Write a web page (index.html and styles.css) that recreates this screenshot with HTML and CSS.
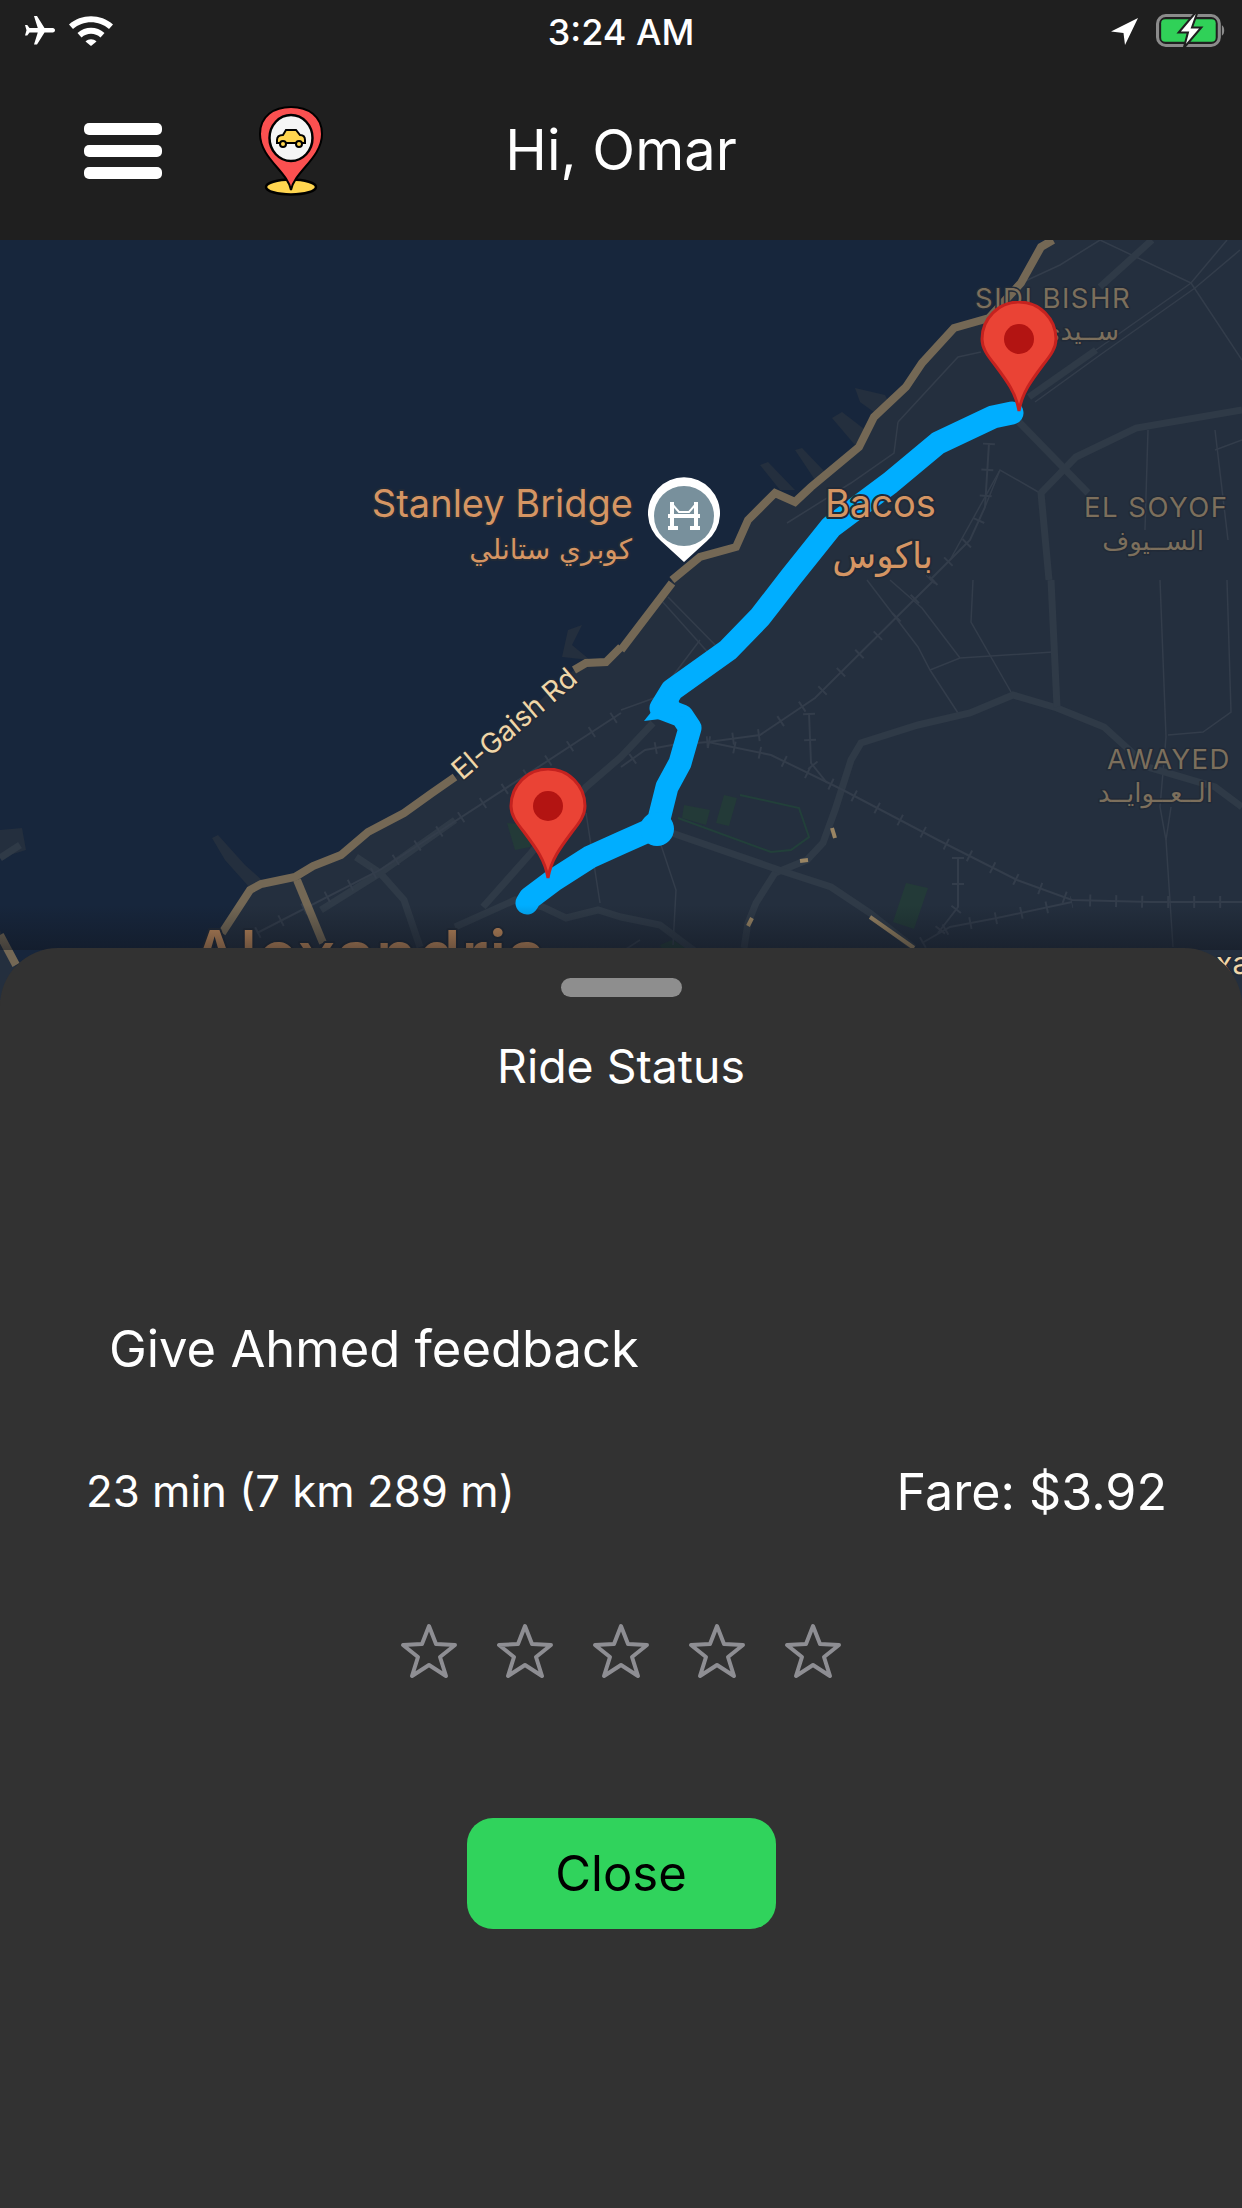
FILE: index.html
```html
<!DOCTYPE html>
<html lang="en">
<head>
    <meta charset="UTF-8">
    <meta name="viewport" content="width=device-width, initial-scale=1.0">
    <title>Ride Status</title>
    <link rel="stylesheet" href="styles.css">
</head>
<body>
<div class="page">

    <header class="top">
        <div class="statusbar">
            <div class="status-left">
                <svg class="ic-plane" viewBox="0 0 24 24"><path transform="rotate(90 12 12)" d="M21 16v-2l-8-5V3.5c0-.83-.67-1.5-1.5-1.5S10 2.67 10 3.5V9l-8 5v2l8-2.5V19l-2 1.5V22l3.5-1 3.5 1v-1.5L13 19v-5.5l8 2.5z"/></svg>
                <svg class="ic-wifi" viewBox="0 0 46 33">
                    <path d="M1 11.5C13 .5 33 .5 45 11.5l-4 4.5C31 7 15 7 5 16z"/>
                    <path d="M9.500 20C17 13 29 13 36.500 20l-4 4.500C27 19.500 19 19.500 13.500 24.500z"/>
                    <path d="M17.500 28.500C20.500 25.500 25.500 25.500 28.500 28.500L23 33z"/>
                </svg>
            </div>
            <div class="clock">3:24 AM</div>
            <div class="status-right">
                <svg class="ic-arrow" viewBox="0 0 27 27"><path d="M27 0 0 13.500 12.500 15 14 27z"/></svg>
                <svg class="ic-battery" viewBox="0 0 68 34">
                    <rect x="1.500" y="2.500" width="60" height="29" rx="8" fill="none" stroke="#8b8b8b" stroke-width="3"/>
                    <rect x="5" y="6" width="53" height="22" rx="4" fill="#30d158"/>
                    <path d="M64 12c3 1 3 9 0 10z" fill="#8b8b8b"/>
                    <path d="M38 0 22 19h9l-4 15 17-20h-9l5-14z" fill="#fff" stroke="#1f1f1f" stroke-width="2"/>
                </svg>
            </div>
        </div>
        <nav class="navbar">
            <div class="nav-left">
                <div class="burger"><span></span><span></span><span></span></div>
                <svg class="logo" viewBox="0 0 64 90">
                    <ellipse cx="32" cy="81" rx="25" ry="7.500" fill="#ffd54f" stroke="#000" stroke-width="2.500"/>
                    <path d="M32 84C29 66 1 52 1 28 1 10 15 1 32 1s31 9 31 27C63 52 35 66 32 84z" fill="#fb5050" stroke="#000" stroke-width="2"/>
                    <ellipse cx="32" cy="32" rx="21.500" ry="23" fill="#f5f5f5" stroke="#000" stroke-width="2.500"/>
                    <path d="M18 34c0-4 3-5 6-5l3-5h10l4 5c3 0 5 2 5 5v3H18z" fill="#ffd54f" stroke="#000" stroke-width="2"/>
                    <circle cx="24" cy="38" r="3" fill="#ffd54f" stroke="#000" stroke-width="2"/>
                    <circle cx="40" cy="38" r="3" fill="#ffd54f" stroke="#000" stroke-width="2"/>
                </svg>
            </div>
            <h1 class="greeting">Hi, Omar</h1>
        </nav>
    </header>

    <section class="map">
        <svg class="map-svg" viewBox="0 240 1242 760">
            <defs>
                <path id="rail1" d="M934 580 815 698 760 735 708 742 672 745 645 750 621 767"/>
                <path id="rail2" d="M708 742 771 755 843 790 938 840 1017 880 1072 900 1150 902 1242 902"/>
                <path id="rail3" d="M809 713 811 763 827 783"/>
                <path id="rail4" d="M922 943 950 927 997 918 1072 902"/>
                <path id="rail5" d="M958 857 958 907 938 933"/>
                <path id="rail6" d="M257 933 380 870 523 777 621 713"/>
                <path id="rail7" d="M989 443 985 507 970 540 930 580"/>
                <symbol id="pin" viewBox="0 0 78 112">
                    <path class="pin-body" d="M39 110C36 92 27 80 15 64 7 54 2 47 2 38A37 37 0 0 1 76 38C76 47 71 54 63 64 51 80 42 92 39 110z"/>
                    <circle class="pin-dot" cx="39" cy="38" r="15"/>
                </symbol>
                <linearGradient id="fade" x1="0" y1="0" x2="0" y2="1">
                    <stop offset="0" stop-color="#10151f" stop-opacity="0"/>
                    <stop offset="1" stop-color="#10151f" stop-opacity=".5"/>
                </linearGradient>
            </defs>

            <rect class="water" x="0" y="240" width="1242" height="760"/>
            <path class="land" d="M190 1000 222 933 250 890 261 884 295 877 313 866 341 855 368 832 404 813 432 793 455 777 574 670 586 663 606 662 621 647 672 580 700 557 736 547 748 520 775 493 795 502 811 487 859 447 874 417 906 387 922 363 954 328 989 318 1021 283 1041 247 1053 240H1242V1000z"/>
            <path class="land" d="M0 830 22 828 26 850 0 858z"/>
            <path class="land" d="M0 1000V930L30 1000z"/>
            <path class="land" d="M212 838 218 835 245 865 264 882 250 888 225 860z"/>
            <path class="land" d="M562 657 568 630 582 625 572 645 590 660z"/>
            <path class="land" d="M780 490 760 465 768 462 795 490z"/>
            <path class="land" d="M815 480 795 450 802 448 825 472z"/>
            <path class="land" d="M855 445 832 418 842 412 868 432z"/>
            <path class="land" d="M878 415 860 402 855 388 885 395 890 405z"/>

            <g class="park">
                <path d="M684 805 710 810 706 825 682 818z"/>
                <path d="M724 795 737 798 729 826 716 823z"/>
                <path d="M906 883 928 888 914 929 893 922z"/>
                <path d="M507 823 530 825 530 847 515 850z"/>
                <path d="M660 945 672 940 690 950 665 955z"/>
            </g>
            <path class="track" d="M740 795 799 808 809 837 791 850 771 852 678 818"/>

            <g class="rd-thin">
                <path d="M973 580 971 622 1011 692"/>
                <path d="M930 670 960 658 1053 652"/>
                <path d="M867 580 918 647 930 670 958 713"/>
                <path d="M890 580 922 608 960 658"/>
                <path d="M1160 580 1166 737 1160 807 1166 840 1173 947"/>
                <path d="M1171 807 1166 840"/>
                <path d="M1227 580 1231 712 1203 732 1168 735"/>
                <path d="M898 422 958 357 981 352"/>
                <path d="M898 422 894 453 851 483 787 523"/>
                <path d="M661 600 712 657"/>
                <path d="M668 597 725 655"/>
                <path d="M621 710 657 697 700 640"/>
                <path d="M586 813 600 903"/>
                <path d="M661 845 676 890 673 945"/>
                <path d="M1029 397 1096 350 1191 283 1227 240"/>
                <path d="M1035 402 1100 355 1195 288 1240 250"/>
                <path d="M1191 283 1242 360"/>
                <path d="M1100 240 1191 283"/>
                <path d="M1148 430 1145 530"/>
                <path d="M1215 430 1228 540"/>
                <path d="M1242 440 1215 450"/>
                <path d="M1021 283 1060 265 1100 240"/>
                <path d="M985 507 1000 470 1040 493"/>
                <path d="M950 560 1000 470"/>
                <path d="M640 940 570 985"/>
            </g>

            <g class="rd-big">
                <path d="M1242 807 1215 787 1148 767 1104 727 1057 708 1013 695 970 713 918 725 861 743 851 760 835 810 823 843 807 860 775 873 756 903 748 923 744 948"/>
                <path d="M672 833 779 870 831 887 870 913 914 948"/>
                <path d="M1051 580 1057 707"/>
                <path d="M1242 410 1136 428 1076 457 1041 493 1049 580"/>
                <path d="M1019 422 1088 493"/>
                <path d="M1100 287 1152 240"/>
                <path d="M1029 397 1096 350"/>
                <path d="M653 723 621 757 586 787 531 853 483 907"/>
                <path d="M321 910 380 873 455 820"/>
                <path d="M356 857 380 873 404 900 420 947"/>
                <path d="M455 927 515 900 543 907 566 918 598 910 621 917 660 925 700 955"/>
                <path d="M0 858 20 845"/>
            </g>

            <g class="rail-line">
                <use href="#rail1"/><use href="#rail2"/><use href="#rail3"/><use href="#rail4"/><use href="#rail5"/><use href="#rail6"/><use href="#rail7"/>
            </g>
            <g class="rail-ticks">
                <use href="#rail1"/><use href="#rail2"/><use href="#rail3"/><use href="#rail4"/><use href="#rail5"/><use href="#rail6"/><use href="#rail7"/>
            </g>

            <path class="coast" d="M222 933 250 890 261 884 295 877 313 866 341 855 368 832 404 813 432 793 455 777 M574 670 586 663 606 662 621 647 M621 650 672 583 M672 580 700 557 736 547 748 520 775 493 795 502 811 487 859 447 874 417 906 387 922 363 954 328 989 318 1021 283 1041 247 1053 240"/>
            <path class="coast" d="M297 880 323 943"/>
            <path class="coast" d="M0 935 16 965"/>
            <path class="coast thin" d="M870 917 914 948"/>
            <path class="coast thin" d="M832 828 835 838"/>
            <path class="coast thin" d="M800 861 808 860"/>
            <path class="coast thin" d="M752 918 748 926"/>

            <text class="lbl lbl-poi" x="633" y="517" text-anchor="end">Stanley Bridge</text>
            <text class="lbl lbl-poi-ar" x="632" y="559" text-anchor="end">كوبري ستانلي</text>
            <text class="lbl lbl-area" x="975" y="308">SIDI BISHR</text>
            <text class="lbl lbl-area-ar" x="1119" y="340" text-anchor="end">ســيدي بشر</text>
            <text class="lbl lbl-area" x="1084" y="517">EL SOYOF</text>
            <text class="lbl lbl-area-ar" x="1204" y="550" text-anchor="end">الســيوف</text>
            <text class="lbl lbl-area" x="1107" y="769">AWAYED</text>
            <text class="lbl lbl-area-ar" x="1213" y="802" text-anchor="end">الــعــوايــد</text>
            <text class="lbl lbl-road" x="462" y="781" transform="rotate(-40.500 462 781)">El-Gaish Rd</text>
            <text class="lbl lbl-road lbl-edge" x="1216" y="974">xa</text>
            <text class="lbl lbl-city" x="190" y="981">Alexandria</text>

            <path class="route" d="M1012 413 993 417 938 443 890 483 831 527 791 577 760 617 728 650 672 690 661 708 682 716 690 728 680 763 667 787 657 827 621 843 590 857 554 880 530 898 527 903"/>
            <path class="route-fill" d="M644 721 672 686 685 716z"/>
            <circle class="route-fill" cx="657" cy="829" r="17"/>

            <text class="lbl lbl-poi" x="825" y="517">Bacos</text>
            <text class="lbl lbl-bacos-ar" x="933" y="568" text-anchor="end">باكوس</text>

            <use href="#pin" x="980" y="301" width="78" height="112"/>
            <use href="#pin" x="509" y="768" width="78" height="112"/>

            <path class="poi-pin" d="M684 562 661 541A36 36 0 1 1 707 541z"/>
            <circle class="poi-dot" cx="684" cy="516" r="30"/>
            <g class="poi-bridge">
                <path d="M672 502V528M696 502V528M668 516H700M668 528H678M690 528H700"/>
                <path class="thin" d="M672 504 679 512H689L696 504"/>
            </g>
            <rect class="map-fade" x="0" y="905" width="1242" height="45"/>
        </svg>
    </section>

    <section class="sheet">
        <div class="handle"></div>
        <h2 class="sheet-title">Ride Status</h2>
        <p class="feedback">Give Ahmed feedback</p>
        <div class="trip-row">
            <span class="trip-time">23 min (7 km 289 m)</span>
            <span class="trip-fare">Fare: $3.92</span>
        </div>
        <div class="stars">
            <svg class="star" viewBox="0 0 58 56"><path d="M29 3 36 21 55 22 40 34 46 53 29 42 12 53 18 34 3 22 22 21z"/></svg>
            <svg class="star" viewBox="0 0 58 56"><path d="M29 3 36 21 55 22 40 34 46 53 29 42 12 53 18 34 3 22 22 21z"/></svg>
            <svg class="star" viewBox="0 0 58 56"><path d="M29 3 36 21 55 22 40 34 46 53 29 42 12 53 18 34 3 22 22 21z"/></svg>
            <svg class="star" viewBox="0 0 58 56"><path d="M29 3 36 21 55 22 40 34 46 53 29 42 12 53 18 34 3 22 22 21z"/></svg>
            <svg class="star" viewBox="0 0 58 56"><path d="M29 3 36 21 55 22 40 34 46 53 29 42 12 53 18 34 3 22 22 21z"/></svg>
        </div>
        <button class="close-btn">Close</button>
    </section>

</div>
</body>
</html>
```

FILE: styles.css
```css
* { box-sizing: border-box; }
html, body { margin: 0; padding: 0; }
body { font-family: Inter, "Liberation Sans", sans-serif; background: #323232; color: #fff; }
.page { width: 1242px; height: 2208px; overflow: hidden; display: flex; flex-direction: column; }

/* top bar */
.top { height: 240px; background: #1f1f1f; flex: none; }
.statusbar { height: 62px; position: relative; display: flex; justify-content: space-between; padding: 13px 16px 0 22px; }
.status-left, .status-right { display: flex; align-items: flex-start; }
.ic-plane { width: 36px; height: 36px; margin-top: 0; fill: #fff; }
.ic-wifi { width: 46px; height: 33px; margin-left: 10px; fill: #fff; }
.ic-arrow { width: 27px; height: 27px; margin-top: 5px; fill: #fff; }
.ic-battery { width: 70px; height: 35px; margin-left: 18px; }
.clock { position: absolute; left: 0; right: 0; top: 13px; text-align: center; font-size: 36px; font-weight: 500; line-height: 38px; }
.navbar { height: 178px; position: relative; display: flex; align-items: center; padding-left: 84px; }
.nav-left { display: flex; align-items: center; gap: 97px; }
.burger { width: 78px; display: flex; flex-direction: column; gap: 10.5px; }
.burger span { height: 11.500px; background: #fff; border-radius: 5px; }
.logo { width: 64px; height: 90px; }
.greeting { position: absolute; left: 0; right: 0; top: 56px; margin: 0; text-align: center; font-size: 56px; font-weight: 400; line-height: 64px; }

/* map */
.map { height: 760px; flex: none; }
.map-svg { display: block; width: 1242px; height: 760px; }
.water { fill: #17263c; }
.land { fill: #242f3e; }
.park { fill: #233a38; }
.track { fill: none; stroke: #22403a; stroke-width: 2; }
.rd-thin { fill: none; stroke: #333d4b; stroke-width: 1.5; }
.rd-big { fill: none; stroke: #2f3a47; stroke-width: 7; }
.rail-line { fill: none; stroke: #333d4b; stroke-width: 2; }
.rail-ticks { fill: none; stroke: #333d4b; stroke-width: 12; stroke-dasharray: 2 24; }
.coast { fill: none; stroke: #746855; stroke-width: 8; }
.coast.thin { stroke: #9a8563; stroke-width: 4; }
.route { fill: none; stroke: #00aeff; stroke-width: 23; stroke-linejoin: round; stroke-linecap: round; }
.route-fill { fill: #00aeff; }
.pin-body { fill: #ea4335; stroke: #c5221f; stroke-width: 3; }
.pin-dot { fill: #b31412; }
.poi-pin { fill: #fff; }
.poi-dot { fill: #78909c; }
.poi-bridge { fill: none; stroke: #fff; stroke-width: 4; }
.poi-bridge .thin { stroke-width: 2; }
.map-fade { fill: url(#fade); }
.lbl { font-family: Inter, "DejaVu Sans", sans-serif; paint-order: stroke; stroke: #212a37; stroke-width: 4px; stroke-linejoin: round; }
.lbl-poi { font-size: 38px; fill: #d59563; }
.lbl-poi-ar { font-family: "DejaVu Sans", sans-serif; font-size: 28px; fill: #d59563; }
.lbl-bacos-ar { font-family: "DejaVu Sans", sans-serif; font-size: 36px; fill: #d59563; }
.lbl-area { font-size: 27.5px; letter-spacing: 1.5px; fill: #7c6f5c; stroke-width: 3px; }
.lbl-area-ar { font-family: "DejaVu Sans", sans-serif; font-size: 26px; fill: #7c6f5c; stroke-width: 3px; }
.lbl-road { font-size: 28px; fill: #f0d6a8; stroke-width: 3px; }
.lbl-edge { font-size: 30px; }
.lbl-city { font-size: 70px; font-weight: 500; fill: #c68d5c; }

/* bottom sheet */
.sheet { position: relative; margin-top: -52px; flex: 1; background: #323232; border-radius: 58px 58px 0 0; display: flex; flex-direction: column; }
.handle { width: 121px; height: 19px; margin: 30px auto 0; background: #8e8e8e; border-radius: 10px; }
.sheet-title { margin: 42px 0 0; text-align: center; font-size: 46.4px; font-weight: 400; line-height: 54px; }
.feedback { margin: 226px 0 0; padding-left: 109px; font-size: 50.7px; line-height: 60px; }
.trip-row { margin-top: 82px; padding: 0 75px 0 86px; display: flex; justify-content: space-between; align-items: center; height: 60px; }
.trip-time { font-size: 43.8px; }
.trip-fare { font-size: 50.2px; }
.stars { margin-top: 102px; display: flex; justify-content: center; gap: 38px; }
.star { width: 58px; height: 56px; fill: none; stroke: #8e8e93; stroke-width: 4; stroke-linejoin: round; }
.close-btn { margin: 139px auto 0; width: 309px; height: 111px; border: none; border-radius: 26px; background: #30d35c; color: #000; font-family: inherit; font-size: 49px; }
```
